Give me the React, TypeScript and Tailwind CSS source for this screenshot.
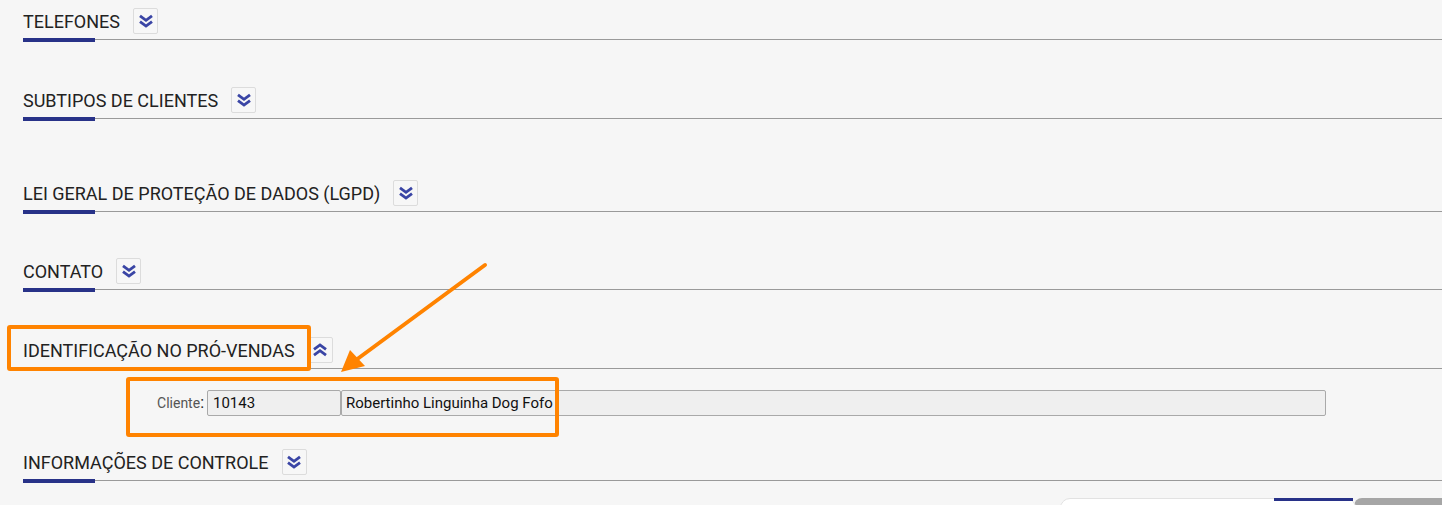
import React from 'react'

// seções do cadastro de cliente
const SECTIONS = [
  { id: 'tel',    label: 'TELEFONES',                             open: false, gap: 'mt-[8px]' },
  { id: 'sub',    label: 'SUBTIPOS DE CLIENTES',                  open: false, gap: 'mt-[45px]' },
  { id: 'lgpd',   label: 'LEI GERAL DE PROTEÇÃO DE DADOS (LGPD)', open: false, gap: 'mt-[59px]' },
  { id: 'cont',   label: 'CONTATO',                               open: false, gap: 'mt-[44px]' },
  { id: 'pre',    label: 'IDENTIFICAÇÃO NO PRÓ-VENDAS',           open: true,  gap: 'mt-[45px]' },
  { id: 'ctrl',   label: 'INFORMAÇÕES DE CONTROLE',               open: false, gap: 'mt-[33px]' },
] as const

function Chevrons({ up }: { up?: boolean }) {
  return (
    <svg width="16" height="14" viewBox="0 0 16 14" className={up ? 'rotate-180' : ''}>
      <path d="M2 1.8 L8 6.3 L14 1.8" fill="none" stroke="#3a45a5" strokeWidth="2.8" />
      <path d="M2 7.6 L8 12.1 L14 7.6" fill="none" stroke="#3a45a5" strokeWidth="2.8" />
    </svg>
  )
}

function Header({ label, open }: { label: string; open: boolean }) {
  return (
    <div>
      <div className="flex items-center gap-[13px] h-[26px]">
        <span className="text-[18px] text-[#222] font-['Roboto',sans-serif] leading-none pt-[1px]">{label}</span>
        <button className="w-[25px] h-[26px] flex items-center justify-center bg-[#f7f7f7] border border-[#dcdcdc] rounded-[2px]">
          <Chevrons up={open} />
        </button>
      </div>
      <div className="mt-[5px] border-t border-[#9a9a9a]">
        <div className="w-[72px] h-[4px] bg-[#283288] -mt-[2px]" />
      </div>
    </div>
  )
}

export default function App() {
  return (
    <div className="relative h-[505px] overflow-hidden bg-[#f6f6f6] font-['Roboto',sans-serif]">
      <div className="pl-[23px]">
        {SECTIONS.map(s => (
          <div key={s.id} className={s.gap}>
            <Header label={s.label} open={s.open} />
            {s.open && (
              <div className="mt-[19px] flex items-center h-[26px]">
                <div className="w-[181px] text-right text-[14px] text-[#555]">
                  Cliente<span className="text-[#222] text-[16px]">:</span>
                </div>
                <div className="ml-[3px] w-[134px] h-[26px] bg-[#efefef] border border-[#a9a9a9] rounded-[2px] px-[5px] flex items-center text-[15px] text-[#111]">10143</div>
                <div className="w-[985px] h-[26px] bg-[#efefef] border border-[#a9a9a9] rounded-[2px] px-[4px] flex items-center text-[15px] text-[#111]">Robertinho Linguinha Dog Fofo</div>
              </div>
            )}
          </div>
        ))}
      </div>

      {/* barra flutuante cortada no rodapé */}
      <div className="absolute left-[1060px] top-[498px] flex">
        <div className="relative w-[296px] h-[20px] bg-white border border-[#e2e2e2] rounded-t-[10px]">
          <div className="absolute left-[213px] -top-px w-[79px] h-[3px] bg-[#283288]" />
        </div>
        <div className="w-[90px] h-[20px] bg-[#a6a6a6] rounded-tl-[8px] ml-[-2px]" />
      </div>

      {/* marcações em laranja */}
      <div className="absolute left-[7px] top-[325px] w-[304px] h-[46px] border-[4px] border-[#ff8300] rounded-[3px]" />
      <div className="absolute left-[126px] top-[377px] w-[433px] h-[60px] border-[4px] border-[#ff8300] rounded-[3px]" />
      <svg className="absolute left-0 top-0" width="1442" height="505">
        <line x1="485" y1="265" x2="356" y2="360" stroke="#ff8300" strokeWidth="4" strokeLinecap="round" />
        <polygon points="341,372 350,350 365,366" fill="#ff8300" />
      </svg>
    </div>
  )
}
